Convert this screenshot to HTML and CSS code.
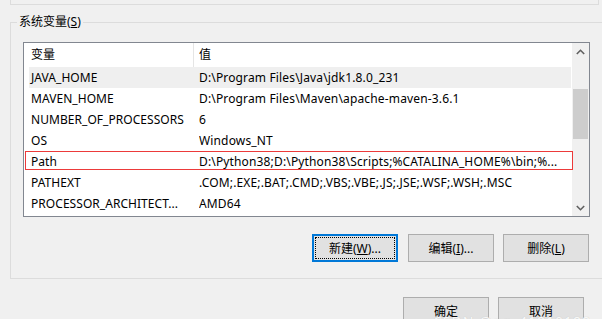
FILE: index.html
```html
<!DOCTYPE html>
<html lang="zh-CN">
<head>
<meta charset="utf-8">
<title>系统变量</title>
<link rel="stylesheet" href="styles.css">
</head>
<body>
<div class="top-group"></div>
<div class="group">
  <div class="group-title">系统变量(<u>S</u>)</div>
  <div class="list">
    <div class="table">
      <div class="head">
        <div class="hcell hcell-name">变量</div>
        <div class="hcell hcell-value">值</div>
      </div>
      <div class="row row-hover"><div class="c1">JAVA_HOME</div><div class="c2">D:\Program Files\Java\jdk1.8.0_231</div></div>
      <div class="row"><div class="c1">MAVEN_HOME</div><div class="c2">D:\Program Files\Maven\apache-maven-3.6.1</div></div>
      <div class="row"><div class="c1">NUMBER_OF_PROCESSORS</div><div class="c2">6</div></div>
      <div class="row"><div class="c1">OS</div><div class="c2">Windows_NT</div></div>
      <div class="row"><div class="c1">Path</div><div class="c2">D:\Python38;D:\Python38\Scripts;%CATALINA_HOME%\bin;%...</div></div>
      <div class="row"><div class="c1">PATHEXT</div><div class="c2">.COM;.EXE;.BAT;.CMD;.VBS;.VBE;.JS;.JSE;.WSF;.WSH;.MSC</div></div>
      <div class="row"><div class="c1">PROCESSOR_ARCHITECT...</div><div class="c2">AMD64</div></div>
    </div>
    <div class="scrollbar">
      <div class="sb-btn">
        <svg width="9" height="6" viewBox="0 0 9 6"><polyline points="0.8,5 4.5,1.3 8.2,5" fill="none" stroke="#606060" stroke-width="1.6"/></svg>
      </div>
      <div class="sb-track"><div class="sb-thumb"></div></div>
      <div class="sb-btn">
        <svg width="9" height="6" viewBox="0 0 9 6"><polyline points="0.8,1 4.5,4.7 8.2,1" fill="none" stroke="#606060" stroke-width="1.6"/></svg>
      </div>
    </div>
    <div class="mark"></div>
  </div>
  <div class="btn-row">
    <button class="btn btn-focus"><span class="focus-ring">新建(<u>W</u>)...</span></button>
    <button class="btn">编辑(<u>I</u>)...</button>
    <button class="btn">删除(<u>L</u>)</button>
  </div>
</div>
<div class="dialog-buttons">
  <button class="btn">确定</button>
  <button class="btn">取消</button>
</div>
<div class="watermark">CSDN @qq_41810188</div>
</body>
</html>
```

FILE: styles.css
```css
html, body {
  margin: 0;
  padding: 0;
}
body {
  width: 602px;
  height: 319px;
  overflow: hidden;
  background: #f0f0f0;
  font-family: "Noto Sans", "Noto Sans CJK SC", sans-serif;
  font-size: 12px;
  color: #000;
  position: relative;
}
.top-group {
  margin-left: 10px;
  width: 587px;
  height: 4px;
  border-left: 1px solid #dcdcdc;
  border-right: 1px solid #dcdcdc;
  border-bottom: 1px solid #dcdcdc;
}
.group {
  margin-top: 17px;
  margin-left: 10px;
  width: 620px;
  height: 255px;
  border: 1px solid #dcdcdc;
}
.group-title {
  width: max-content;
  margin: -9px 0 0 6px;
  padding: 0 2px;
  height: 16px;
  line-height: 16px;
  background: #f0f0f0;
}
.list {
  position: relative;
  margin: 12px 0 0 12px;
  width: 565px;
  height: 173px;
  border: 1px solid #828790;
  background: #fff;
  display: flex;
}
.table {
  flex: 1;
  padding: 0 1px 0 5px;
  overflow: hidden;
}
.head {
  display: flex;
  height: 24px;
  line-height: 24px;
}
.hcell-name {
  width: 162px;
  padding-left: 2px;
  border-right: 1px solid #e5e5e5;
}
.hcell-value {
  padding-left: 5px;
}
.row {
  display: grid;
  grid-template-columns: 170px 1fr;
  height: 21px;
  line-height: 21px;
  white-space: nowrap;
  letter-spacing: 0.15px;
}
.row-hover {
  background: #efefef;
}
.c1 {
  padding-left: 2px;
  overflow: hidden;
  letter-spacing: 0.05px;
}
.c2 {
  overflow: hidden;
}
.scrollbar {
  width: 17px;
  background: #f0f0f0;
  display: flex;
  flex-direction: column;
}
.sb-btn {
  height: 17px;
  display: flex;
  align-items: center;
  justify-content: center;
}
.sb-track {
  flex: 1;
  padding-top: 29px;
}
.sb-thumb {
  margin-left: 1px;
  width: 15px;
  height: 50px;
  background: #cdcdcd;
}
.mark {
  position: absolute;
  left: 1px;
  top: 108px;
  width: 546px;
  height: 17px;
  border: 1px solid #ec3a3a;
}
.btn-row {
  margin: 17px 0 0 12px;
  width: 566px;
  display: flex;
  justify-content: flex-end;
  gap: 9px;
}
.btn {
  box-sizing: border-box;
  width: 86px;
  height: 28px;
  padding: 0;
  margin: 0;
  border: 1px solid #adadad;
  background: #e1e1e1;
  font-family: "Noto Sans", "Noto Sans CJK SC", sans-serif;
  font-size: 12px;
  color: #000;
  display: flex;
  align-items: center;
  justify-content: center;
}
.btn-focus {
  margin-right: 1px;
  border: 2px solid #0078d7;
  padding: 1px;
}
.focus-ring {
  flex: 1;
  align-self: stretch;
  display: flex;
  align-items: center;
  justify-content: center;
  border: 1px dotted #000;
}
.dialog-buttons {
  margin-top: 18px;
  padding-right: 18px;
  display: flex;
  justify-content: flex-end;
  gap: 9px;
}
.watermark {
  position: absolute;
  left: 433px;
  top: 314px;
  font-size: 14px;
  line-height: 16px;
  color: rgba(255, 255, 255, 0.9);
  text-shadow: 0 0 1px #bbb;
  white-space: nowrap;
  letter-spacing: 1px;
}
```
